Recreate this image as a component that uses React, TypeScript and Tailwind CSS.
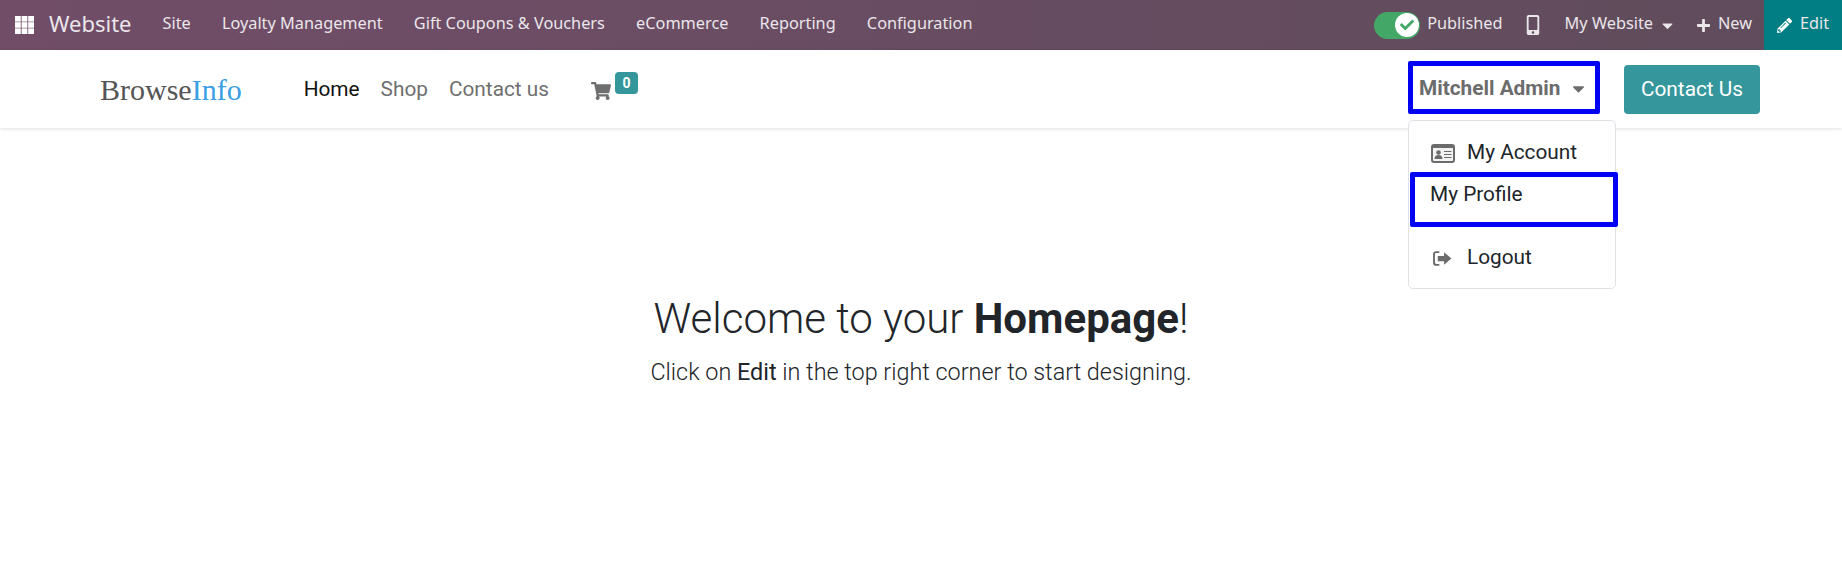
import { FaCheck, FaMobileAlt, FaPlus, FaPencilAlt, FaShoppingCart, FaCaretDown } from "react-icons/fa";

const menu = ["Site", "Loyalty Management", "Gift Coupons & Vouchers", "eCommerce", "Reporting", "Configuration"];

function LogoutIcon() {
  return (
    <svg viewBox="0 0 20 18" className="w-[21px] h-[19px]" fill="#6b6b6b">
      <path d="M7 2H4a3 3 0 0 0-3 3v8a3 3 0 0 0 3 3h3v-1.800H4.200A1.400 1.400 0 0 1 2.800 12.800V5.200A1.400 1.400 0 0 1 4.200 3.800H7z" />
      <path d="M5.500 6.500h6V3l7 6-7 6v-3.500h-6z" />
    </svg>
  );
}

function CardIcon() {
  return (
    <svg viewBox="0 0 24 19" className="w-[24px] h-[19px]">
      <rect x="1" y="1" width="22" height="17" rx="2" fill="#f3f3f3" stroke="#6b6b6b" strokeWidth="2" />
      <rect x="1" y="1" width="22" height="3" fill="#6b6b6b" />
      <circle cx="7.500" cy="8.500" r="2.300" fill="#6b6b6b" />
      <path d="M3.500 15c0-2.800 1.700-4 4-4s4 1.200 4 4z" fill="#6b6b6b" />
      <path d="M13 7.500h7.500M13 10.500h7.500M13 13.500h7.500" stroke="#6b6b6b" strokeWidth="1.200" />
    </svg>
  );
}

function GridIcon() {
  const cells = [0, 1, 2].flatMap((r) => [0, 1, 2].map((c) => [r, c]));
  return (
    <svg viewBox="0 0 19 18" className="ml-[15px] w-[19px] h-[18px]" fill="#ffffff">
      {cells.map(([r, c]) => (
        <rect key={`${r}-${c}`} x={c * 6.6} y={r * 6.2} width="5.800" height="5.600" />
      ))}
    </svg>
  );
}

export default function App() {
  return (
    <div className="min-h-[564px] bg-white font-['Roboto',sans-serif] overflow-hidden">
      <div className="h-[50px] flex items-center bg-[linear-gradient(90deg,#714d68,#5f4c5b)] text-[#ebe6ea] font-['Noto_Sans',sans-serif] text-[16.300px]">
        <GridIcon />
        <span className="ml-[15px] pb-[3px] text-[22px]">Website</span>
        <div className="ml-[31px] pb-[3px] flex gap-[31.200px]">
          {menu.map((m) => (
            <span key={m}>{m}</span>
          ))}
        </div>
        <div className="ml-auto flex items-center h-full">
          <div className="w-[46px] h-[27px] rounded-full bg-[#43a867] flex items-center justify-end pr-[1px]">
            <span className="w-[24px] h-[24px] rounded-full bg-white flex items-center justify-center">
              <FaCheck className="text-[14px] text-[#43a867]" />
            </span>
          </div>
          <span className="ml-[7px] pb-[3px]">Published</span>
          <FaMobileAlt className="ml-[20px] text-[20px]" />
          <span className="ml-[22px] pb-[3px]">My Website</span>
          <FaCaretDown className="ml-[6px] text-[17px]" />
          <FaPlus className="ml-[20px] text-[15px]" />
          <span className="ml-[7px] pb-[3px]">New</span>
          <div className="ml-[12px] w-[78px] h-full bg-[#017e84] flex items-center justify-center gap-[8px]">
            <FaPencilAlt className="text-[15px] text-white" />
            <span className="pb-[3px]">Edit</span>
          </div>
        </div>
      </div>

      <div className="h-[78px] flex items-center bg-white shadow-[0_1px_4px_rgba(0,0,0,0.12)] pl-[100px] pr-[82px] text-[20.800px]">
        <span className="font-['Liberation_Serif',serif] text-[30px] text-[#555555]">
          Browse<span className="text-[#3b9fe3]">Info</span>
        </span>
        <div className="ml-[62px] pt-[2px] flex gap-[21px] text-[#6f6f6f]">
          <span className="text-[#111111]">Home</span>
          <span>Shop</span>
          <span>Contact us</span>
        </div>
        <div className="ml-[42px] flex items-start">
          <FaShoppingCart className="mt-[4px] text-[20px] text-[#6f6f6f]" />
          <span className="ml-[4px] -mt-[5px] w-[23px] h-[22px] rounded-[4px] bg-[#35979c] text-white text-[14px] font-bold flex items-center justify-center">0</span>
        </div>
        <div className="ml-auto relative mb-[3px]">
          <div className="w-[192px] h-[53px] border-[5px] border-[#0000f5] rounded-[2px] flex items-center pl-[6px] pt-[2px] text-[#6c6c6c] font-bold">
            <span>Mitchell Admin</span>
            <FaCaretDown className="ml-[8px] text-[19px]" />
          </div>
          <div className="absolute left-0 top-[59px] w-[208px] h-[169px] bg-white border border-[#dee2e6] rounded-[5px] text-[#212529]">
            <div className="absolute left-[22px] top-[17px] flex items-center h-[30px]">
              <CardIcon />
              <span className="ml-[12px]">My Account</span>
            </div>
            <div className="absolute left-[1px] top-[51px] w-[208px] h-[55px] border-[5px] border-[#0000f5] rounded-[2px] pl-[15px] pt-[2px] leading-[30px]">My Profile</div>
            <div className="absolute left-[23px] top-[122px] flex items-center h-[30px]">
              <LogoutIcon />
              <span className="ml-[14px]">Logout</span>
            </div>
          </div>
        </div>
        <div className="ml-[24px] w-[136px] h-[49px] pt-[2px] rounded-[4px] bg-[#35979c] text-white flex items-center justify-center">Contact Us</div>
      </div>

      <div className="pt-[167px] text-center text-[#212529]">
        <h1 className="text-[42px] leading-[48px] font-light">
          Welcome to your <b className="font-bold">Homepage</b>!
        </h1>
        <p className="mt-[13px] text-[23.400px] leading-[33px] font-light">
          Click on <span className="font-normal">Edit</span> in the top right corner to start designing.
        </p>
      </div>
    </div>
  );
}
